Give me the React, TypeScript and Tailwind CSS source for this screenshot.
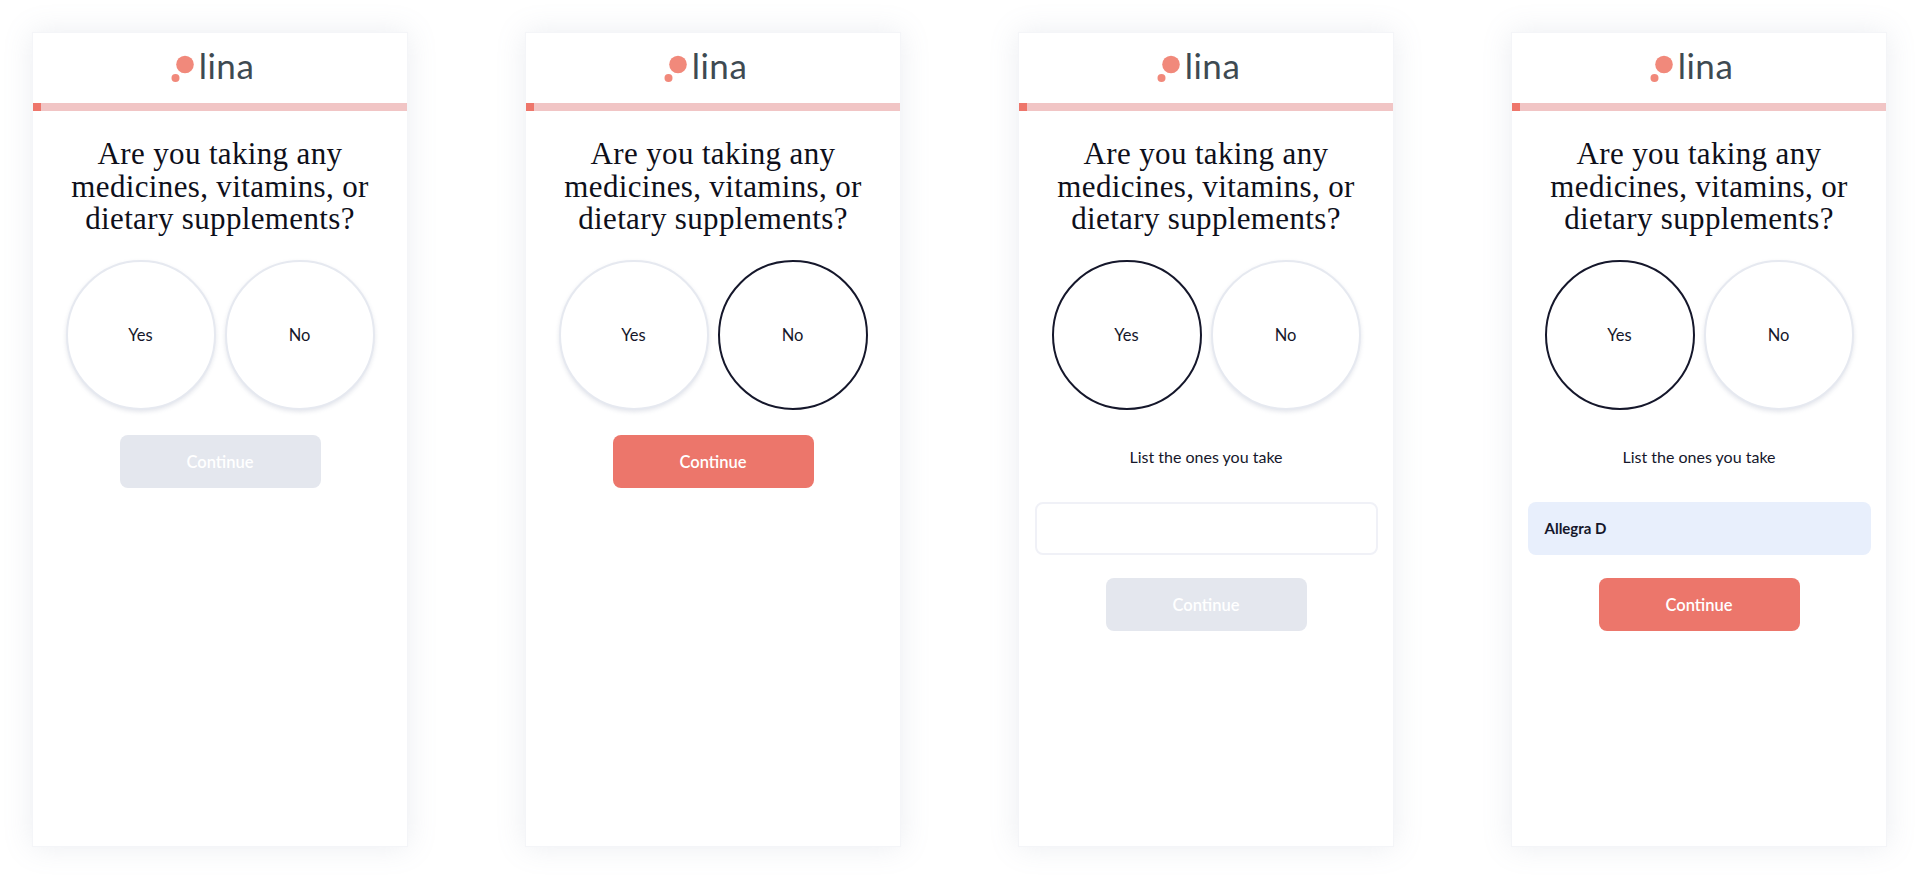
import React from 'react';

interface ScreenProps {
  selected?: 'yes' | 'no';
  showList?: boolean;
  value?: string;
  canContinue?: boolean;
}

const Logo: React.FC = () => (
  <div className="flex h-[70px] items-center justify-center pr-[18px]">
    <svg width="30" height="32" viewBox="0 0 30 32" className="mt-[1px]">
      <circle cx="17" cy="11.5" r="8.8" fill="#f1897b" />
      <circle cx="7.5" cy="25" r="4" fill="#f1897b" />
    </svg>
    <span className="mb-[5px] ml-[1px] font-['Lato'] text-[35px] leading-none font-normal tracking-[0.5px] text-[#3e4a52]">lina</span>
  </div>
);

const Choice: React.FC<{ label: string; active: boolean }> = ({ label, active }) => (
  <button
    className={`flex h-[150px] w-[150px] items-center justify-center rounded-full bg-white pt-[2px] text-[16.5px] text-[#15172b] ${
      active
        ? 'border-2 border-[#15172b]'
        : 'border-2 border-[#e6e9f0] shadow-[0_2px_4px_rgba(120,130,160,0.2)]'
    }`}
  >
    {label}
  </button>
);

const Screen: React.FC<ScreenProps> = ({ selected, showList, value, canContinue }) => (
  <div className="flex h-[815px] w-[376px] shrink-0 flex-col border border-[#f4f5f8] bg-white font-['Lato'] shadow-[0_0_28px_rgba(130,140,170,0.16)]">
    <Logo />
    <div className="h-[8px] bg-[#f1c5c5]">
      <div className="h-full w-[8px] bg-[#ee766b]" />
    </div>

    <div className="flex flex-col items-center">
      <h1 className="mt-[27px] w-full text-center font-['Liberation_Serif'] text-[31px] leading-[32.5px] font-normal tracking-[0.35px] text-[#0e0f1a]">
        Are you taking any
        <br />
        medicines, vitamins, or
        <br />
        dietary supplements?
      </h1>

      <div className="mt-[24px] flex gap-[9px]">
        <Choice label="Yes" active={selected === 'yes'} />
        <Choice label="No" active={selected === 'no'} />
      </div>

      {showList && (
        <>
          <p className="mt-[37px] text-[16px] leading-[20px] text-[#15172b]">List the ones you take</p>
          <div
            className={`mt-[35px] flex h-[53px] w-[343px] items-center rounded-[8px] px-[17px] text-[15px] font-bold text-[#15172b] ${
              value ? 'bg-[#e8effc]' : 'border-2 border-[#f0f1f7] bg-white'
            }`}
          >
            {value}
          </div>
        </>
      )}

      <button
        className={`flex h-[53px] w-[201px] items-center justify-center rounded-[8px] pt-[2px] text-[16.5px] font-semibold text-white ${
          showList ? 'mt-[23px]' : 'mt-[25px]'
        } ${canContinue ? 'bg-[#ec766b]' : 'bg-[#e4e7ee]'}`}
      >
        Continue
      </button>
    </div>
  </div>
);

export default function App() {
  return (
    <div className="flex h-[879px] gap-[117px] overflow-hidden bg-white pt-[32px] pl-[32px]">
      <Screen />
      <Screen selected="no" canContinue />
      <Screen selected="yes" showList />
      <Screen selected="yes" showList value="Allegra D" canContinue />
    </div>
  );
}
